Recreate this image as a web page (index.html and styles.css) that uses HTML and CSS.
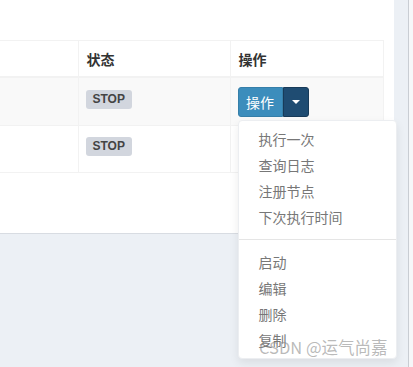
FILE: index.html
```html
<!DOCTYPE html>
<html lang="zh-CN">
<head>
    <meta charset="UTF-8">
    <meta name="viewport" content="width=device-width, initial-scale=1.0">
    <title>任务列表</title>
    <link rel="stylesheet" href="styles.css">
</head>
<body>
    <div class="page">
        <div class="content">
            <div class="box">
                <table class="job-table">
                    <thead>
                        <tr>
                            <th class="col-name"></th>
                            <th class="col-status">状态</th>
                            <th class="col-op">操作</th>
                        </tr>
                    </thead>
                    <tbody>
                        <tr class="odd">
                            <td></td>
                            <td><span class="label">STOP</span></td>
                            <td>
                                <div class="btn-group">
                                    <button class="btn">操作</button>
                                    <button class="btn toggle"><span class="caret"></span></button>
                                    <ul class="dropdown-menu">
                                        <li><a href="#">执行一次</a></li>
                                        <li><a href="#">查询日志</a></li>
                                        <li><a href="#">注册节点</a></li>
                                        <li><a href="#">下次执行时间</a></li>
                                        <li class="divider"></li>
                                        <li><a href="#">启动</a></li>
                                        <li><a href="#">编辑</a></li>
                                        <li><a href="#">删除</a></li>
                                        <li><a href="#">复制</a></li>
                                    </ul>
                                </div>
                            </td>
                        </tr>
                        <tr class="even">
                            <td></td>
                            <td><span class="label">STOP</span></td>
                            <td></td>
                        </tr>
                    </tbody>
                </table>
            </div>
        </div>
        <div class="edge"></div>
    </div>
    <div class="watermark">CSDN @运气尚嘉</div>
</body>
</html>
```

FILE: styles.css
```css
* {
    margin: 0;
    padding: 0;
    box-sizing: border-box;
}
body {
    font-family: "Noto Sans CJK SC", "Liberation Sans", sans-serif;
    font-size: 14px;
    color: #333;
    background-color: #ecf0f5;
    height: 367px;
    overflow: hidden;
}
.page {
    display: flex;
    height: 367px;
}
.content {
    flex: 1;
}
.edge {
    width: 5px;
    border-left: 1px solid #c9cdd3;
    background: #f6f7f9;
}
.box {
    width: 394px;
    height: 234px;
    background: #fff;
    padding-top: 40px;
    border-bottom: 1px solid #d8dce2;
}
.job-table {
    border-collapse: collapse;
    width: 383px;
    table-layout: fixed;
}
.job-table th,
.job-table td {
    border: 1px solid #f2f2f2;
    text-align: left;
    vertical-align: top;
}
.job-table th {
    font-weight: bold;
    line-height: 20px;
    padding: 8px 8px 7px;
    border-bottom: 2px solid #f2f2f2;
}
.job-table th:first-child,
.job-table td:first-child {
    border-left: none;
}
.col-name { width: 78px; }
.col-status { width: 152px; }
.col-op { width: 153px; }
.job-table td {
    padding: 9px 7px 0;
}
.odd td {
    background: #f9f9f9;
    height: 48px;
}
.even td {
    height: 47px;
    padding-top: 8px;
}
.label {
    display: inline-block;
    margin-top: 2px;
    font-family: "Liberation Sans", Arial, sans-serif;
    font-size: 12px;
    font-weight: bold;
    line-height: 13px;
    padding: 3px 7px 3px;
    color: #444;
    background: #d2d6de;
    border-radius: 3px;
}
.btn-group {
    position: relative;
    display: flex;
}
.btn {
    height: 30px;
    border: 1px solid #367fa9;
    background: #3c8dbc;
    color: #fff;
    font-family: "Noto Sans CJK SC", sans-serif;
    font-size: 14px;
    line-height: 20px;
    padding: 0;
    white-space: nowrap;
    border-radius: 3px 0 0 3px;
    width: 45px;
}
.btn.toggle {
    width: 26px;
    background: #1f4c72;
    border-color: #183b59;
    border-radius: 0 3px 3px 0;
    display: flex;
    align-items: center;
    justify-content: center;
}
.caret {
    width: 0;
    height: 0;
    border-top: 4px solid #fff;
    border-left: 4px solid transparent;
    border-right: 4px solid transparent;
}
.dropdown-menu {
    position: absolute;
    top: 33px;
    left: 0;
    width: 159px;
    list-style: none;
    background: #fff;
    padding: 5px 0;
    border: 1px solid #eceef1;
    border-radius: 4px;
    box-shadow: 0 4px 10px rgba(0, 0, 0, 0.08);
    z-index: 2;
}
.dropdown-menu li a {
    display: block;
    padding: 3px 20px;
    line-height: 20px;
    font-size: 14px;
    color: #777;
    text-decoration: none;
}
.dropdown-menu .divider {
    height: 1px;
    margin: 9px 0;
    background: #e5e5e5;
}
.watermark {
    position: absolute;
    left: 259px;
    top: 335px;
    font-family: "Noto Sans CJK SC", "Liberation Sans", sans-serif;
    font-size: 16.5px;
    color: rgba(140, 140, 140, 0.6);
    white-space: nowrap;
    z-index: 3;
}
```
